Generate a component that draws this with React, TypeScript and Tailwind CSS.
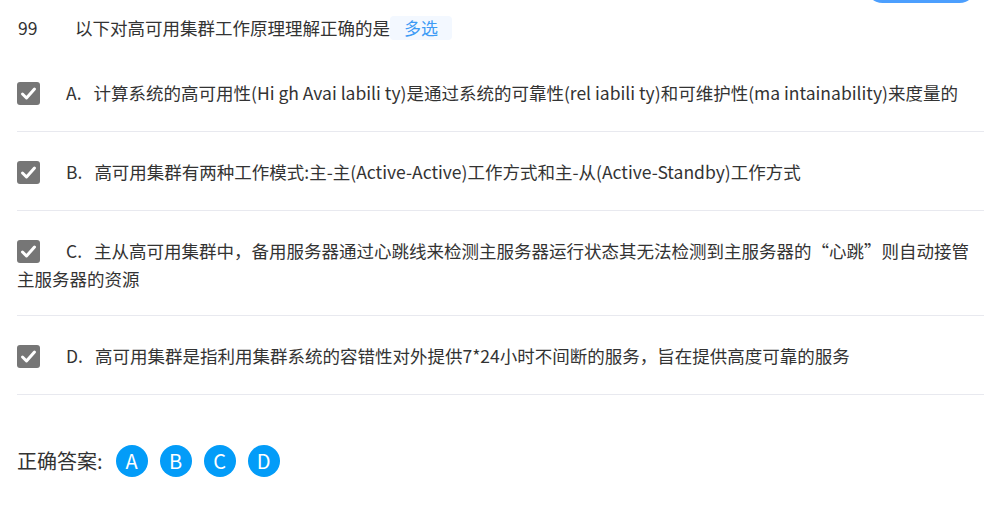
import React from 'react'

const options = [
  { key: 'A', text: '计算系统的高可用性(Hi gh Avai labili ty)是通过系统的可靠性(rel iabili ty)和可维护性(ma intainability)来度量的' },
  { key: 'B', text: '高可用集群有两种工作模式:主-主(Active-Active)工作方式和主-从(Active-Standby)工作方式' },
  { key: 'C', text: '主从高可用集群中，备用服务器通过心跳线来检测主服务器运行状态其无法检测到主服务器的“心跳”则自动接管主服务器的资源' },
  { key: 'D', text: '高可用集群是指利用集群系统的容错性对外提供7*24小时不间断的服务，旨在提供高度可靠的服务' },
]

function CheckBox() {
  return (
    <span className="inline-flex w-[23px] h-[23px] rounded-[3px] bg-[#767676] items-center justify-center align-top mt-[2px] mb-[3px] mr-[26px]">
      <svg width="17" height="17" viewBox="0 0 17 17">
        <path d="M2.5 9 L6.5 13 L14.5 4" fill="none" stroke="#fff" strokeWidth="3" strokeLinecap="round" strokeLinejoin="round" />
      </svg>
    </span>
  )
}

export default function App() {
  return (
    <div
      className="relative w-[997px] h-[512px] bg-white overflow-hidden text-[#333]"
      style={{ fontFamily: '"Noto Sans CJK SC", "Microsoft YaHei", sans-serif' }}
    >
      {/* top button cut off by scroll */}
      <div className="absolute top-[-30px] left-[866px] w-[110px] h-[33px] rounded-full bg-[#4c9ffe]" />

      <div className="px-[17px] pt-[14px]">
        {/* Question title */}
        <div className="flex items-center h-[28px] text-[17.5px] leading-[28px]">
          <span className="w-[58px] pl-[1px]">99</span>
          <span>以下对高可用集群工作原理理解正确的是</span>
          <span className="h-[24px] px-[14px] rounded-[4px] bg-[#f3f8ff] text-[#3d9bf5] text-[17px] leading-[24px]">多选</span>
        </div>

        {/* Options */}
        <div className="mt-[11px] w-[967px]">
          {options.map(o => (
            <div key={o.key} className="pt-[27px] pb-[23px] border-b border-[#e8e9ef] text-[17.5px] leading-[26px]">
              <CheckBox />
              <span className="mr-[12px]">{o.key}.</span>
              <span>{o.text}</span>
            </div>
          ))}
        </div>

        {/* Correct answers */}
        <div className="mt-[50px] flex items-center h-[32px]">
          <span className="text-[20px] leading-[32px] mr-[13px]">正确答案:</span>
          <div className="flex gap-[12px]">
            {['A', 'B', 'C', 'D'].map(k => (
              <span key={k} className="w-[32px] h-[32px] rounded-full bg-[#039cf8] text-white text-[20px] flex items-center justify-center">
                {k}
              </span>
            ))}
          </div>
        </div>
      </div>
    </div>
  )
}
